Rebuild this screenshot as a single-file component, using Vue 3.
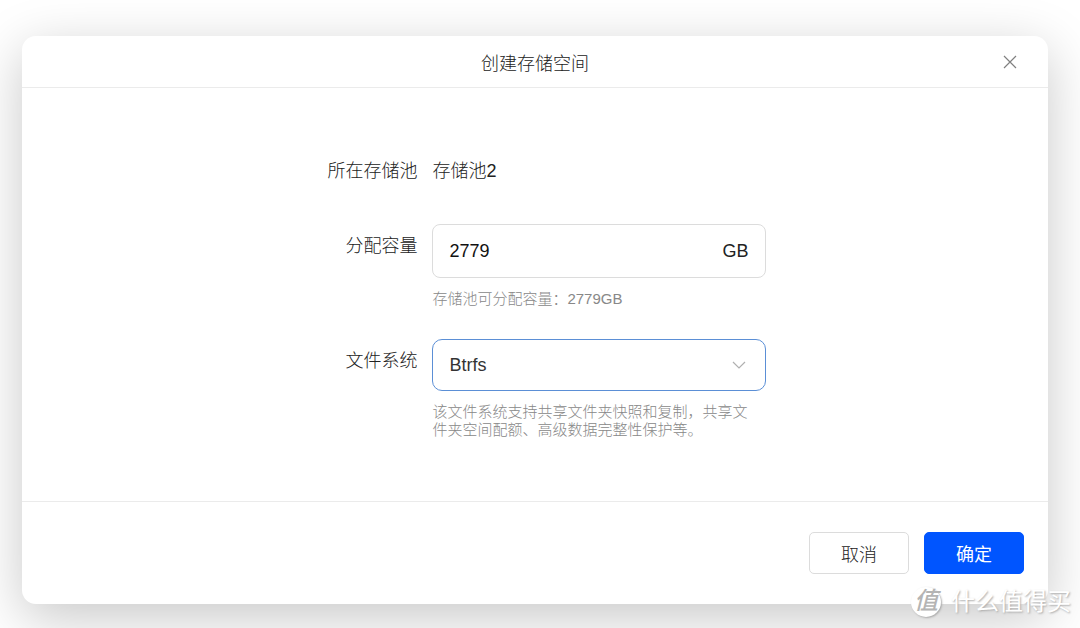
<script setup>
import { ref } from "vue";

const pool = "存储池2";
const available = 2779;
const capacity = ref("2779");
const fileSystem = ref("Btrfs");
const fileSystems = ["Btrfs", "EXT4"];
</script>

<template>
  <div class="page">
    <form class="dialog" role="dialog" aria-labelledby="title" @submit.prevent>
      <header class="dialog__header">
        <h1 id="title">创建存储空间</h1>
        <button class="close" type="button" aria-label="关闭">
          <svg viewBox="0 0 14 14" width="14" height="14">
            <path d="M1 1L13 13M13 1L1 13" />
          </svg>
        </button>
      </header>

      <div class="dialog__body">
        <div class="row">
          <span class="label">所在存储池</span>
          <span class="value">{{ pool }}</span>
        </div>

        <div class="row">
          <label class="label" for="capacity">分配容量</label>
          <div>
            <div class="field field--input">
              <input id="capacity" v-model="capacity" type="text" />
              <span class="unit">GB</span>
            </div>
            <p class="hint">存储池可分配容量：{{ available }}GB</p>
          </div>
        </div>

        <div class="row">
          <label class="label" for="fs">文件系统</label>
          <div>
            <div class="field field--select">
              <select id="fs" v-model="fileSystem">
                <option v-for="fs in fileSystems" :key="fs">{{ fs }}</option>
              </select>
              <svg class="arrow" viewBox="0 0 14 8" width="14" height="8">
                <path d="M1 1L7 7L13 1" />
              </svg>
            </div>
            <p class="hint">
              该文件系统支持共享文件夹快照和复制，共享文件夹空间配额、高级数据完整性保护等。
            </p>
          </div>
        </div>
      </div>

      <footer class="dialog__footer">
        <button class="btn" type="button">取消</button>
        <button class="btn btn--primary" type="submit">确定</button>
      </footer>
    </form>

    <div class="watermark">
      <span class="watermark__logo">值</span>
      <span>什么值得买</span>
    </div>
  </div>
</template>

<style>
body {
  background: #fff;
}
</style>

<style scoped>
.page {
  position: relative;
  min-height: 100vh;
  box-sizing: border-box;
  padding: 36px 32px 24px 22px;
  overflow: hidden;
  color: #222;
  font-family: "Liberation Sans", "Noto Sans CJK SC", sans-serif;
  font-size: 18px;
  font-weight: 300;
}

/* ダイアログ */
.dialog {
  background: #fff;
  border-radius: 14px;
  box-shadow: 0 14px 54px rgba(0, 0, 0, 0.22);
}
.dialog__header {
  display: grid;
  grid-template-columns: 1fr auto 1fr;
  align-items: center;
  height: 51px;
  padding: 0 31px;
  border-bottom: 1px solid #ebebeb;
}
.dialog__header h1 {
  grid-column: 2;
  margin: 0;
  font-size: 18px;
  font-weight: 300;
}
.close {
  display: flex;
  justify-self: end;
  padding: 0;
  border: 0;
  background: none;
}
.close path,
.arrow path {
  fill: none;
  stroke: #808080;
  stroke-width: 1.2;
}
.dialog__body {
  display: grid;
  gap: 31px;
  padding: 61px 0 62px;
}

/* 入力行 */
.row {
  display: grid;
  grid-template-columns: 40% 334px;
}
.label {
  padding-right: 15px;
  line-height: 44px;
  text-align: right;
}
.value {
  line-height: 44px;
}
.field {
  display: flex;
  align-items: center;
  box-sizing: border-box;
  border: 1px solid #dcdcdc;
  border-radius: 8px;
}
.field--input {
  height: 54px;
  padding: 0 17px 0 16px;
}
.field--select {
  position: relative;
  height: 52px;
  border-color: #5b8fd6;
  border-radius: 10px;
}
.field input,
.field select {
  flex: 1;
  min-width: 0;
  padding: 0;
  border: 0;
  outline: 0;
  background: none;
  color: #111;
  font: inherit;
}
.field select {
  height: 100%;
  padding: 0 16px;
  appearance: none;
  color: #333;
}
.arrow {
  position: absolute;
  right: 19px;
  pointer-events: none;
}
.arrow path {
  stroke: #b0b0b0;
}
.hint {
  margin: 12px 0 0;
  padding-right: 8px;
  color: #888;
  font-size: 15px;
  line-height: 18px;
}

/* フッター */
.dialog__footer {
  display: flex;
  justify-content: flex-end;
  gap: 15px;
  padding: 30px 24px;
  border-top: 1px solid #ebebeb;
}
.btn {
  width: 100px;
  height: 42px;
  padding: 0;
  border: 1px solid #dcdcdc;
  border-radius: 5px;
  background: #fff;
  color: #222;
  font: inherit;
}
.btn--primary {
  border-color: #0055ff;
  background: #0055ff;
  color: #fff;
  font-weight: 400;
}

/* 透かし */
.watermark {
  position: absolute;
  right: 9px;
  bottom: 10px;
  display: flex;
  align-items: center;
  gap: 10px;
  color: #fff;
  font-size: 24px;
  font-weight: 400;
  line-height: 32px;
  text-shadow: 1px 1px 2px #aaa;
}
.watermark__logo {
  width: 30px;
  height: 30px;
  border-radius: 50%;
  background: #fff;
  box-shadow: 1px 1px 2px #aaa;
  color: #b4b4b4;
  font-style: italic;
  font-weight: 500;
  line-height: 28px;
  text-align: center;
  text-shadow: none;
}
</style>
